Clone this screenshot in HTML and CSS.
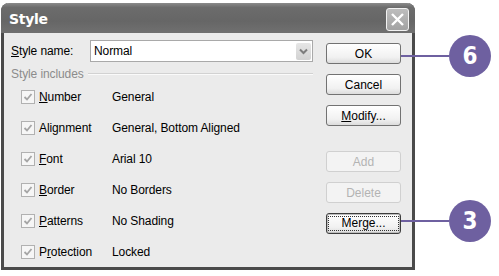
FILE: index.html
```html
<!DOCTYPE html>
<html lang="en">

<head>
    <meta charset="UTF-8">
    <meta name="viewport" content="width=device-width, initial-scale=1.0">
    <title>Style</title>
    <link rel="stylesheet" href="styles.css">
</head>

<body>
    <div class="scene">
        <div class="dialog">
            <div class="titlebar">
                <span class="title">Style</span>
                <span class="close">
                    <svg width="15" height="15" viewBox="0 0 15 15">
                        <path d="M2 2 L13 13 M13 2 L2 13" stroke="#fff" stroke-width="2.4" fill="none" />
                    </svg>
                </span>
            </div>
            <div class="content">
                <div class="main">
                    <div class="name-row">
                        <label class="name-label"><u>S</u>tyle name:</label>
                        <div class="combo">
                            <span class="combo-text">Normal</span>
                            <span class="combo-arrow">
                                <svg width="9" height="7" viewBox="0 0 9 7">
                                    <path d="M1 1.5 L4.5 5 L8 1.5" stroke="#7d7d7d" stroke-width="2" fill="none" />
                                </svg>
                            </span>
                        </div>
                    </div>

                    <div class="group-head">
                        <span class="group-title">Style includes</span>
                        <span class="rule"></span>
                    </div>

                    <ul class="includes">
                        <li>
                            <span class="check"><svg width="12" height="12" viewBox="0 0 12 12"><path d="M2.5 6 L5 8.5 L9.5 3" stroke="#a5a5a5" stroke-width="1.8" fill="none" /></svg></span>
                            <span class="inc-label"><u>N</u>umber</span><span class="inc-value">General</span>
                        </li>
                        <li>
                            <span class="check"><svg width="12" height="12" viewBox="0 0 12 12"><path d="M2.5 6 L5 8.5 L9.5 3" stroke="#a5a5a5" stroke-width="1.8" fill="none" /></svg></span>
                            <span class="inc-label">Alignment</span><span class="inc-value">General, Bottom Aligned</span>
                        </li>
                        <li>
                            <span class="check"><svg width="12" height="12" viewBox="0 0 12 12"><path d="M2.5 6 L5 8.5 L9.5 3" stroke="#a5a5a5" stroke-width="1.8" fill="none" /></svg></span>
                            <span class="inc-label"><u>F</u>ont</span><span class="inc-value">Arial 10</span>
                        </li>
                        <li>
                            <span class="check"><svg width="12" height="12" viewBox="0 0 12 12"><path d="M2.5 6 L5 8.5 L9.5 3" stroke="#a5a5a5" stroke-width="1.8" fill="none" /></svg></span>
                            <span class="inc-label"><u>B</u>order</span><span class="inc-value">No Borders</span>
                        </li>
                        <li>
                            <span class="check"><svg width="12" height="12" viewBox="0 0 12 12"><path d="M2.5 6 L5 8.5 L9.5 3" stroke="#a5a5a5" stroke-width="1.8" fill="none" /></svg></span>
                            <span class="inc-label"><u>P</u>atterns</span><span class="inc-value">No Shading</span>
                        </li>
                        <li>
                            <span class="check"><svg width="12" height="12" viewBox="0 0 12 12"><path d="M2.5 6 L5 8.5 L9.5 3" stroke="#a5a5a5" stroke-width="1.8" fill="none" /></svg></span>
                            <span class="inc-label">P<u>r</u>otection</span><span class="inc-value">Locked</span>
                        </li>
                    </ul>
                </div>

                <div class="buttons">
                    <button class="btn">OK</button>
                    <button class="btn">Cancel</button>
                    <button class="btn"><u>M</u>odify...</button>
                    <button class="btn disabled add">Add</button>
                    <button class="btn disabled">Delete</button>
                    <button class="btn focused"><span class="focus-rect">Merge...</span></button>
                </div>
            </div>
        </div>

        <div class="callout callout-6">
            <span class="callout-line"></span>
            <span class="callout-dot">6</span>
        </div>
        <div class="callout callout-3">
            <span class="callout-line"></span>
            <span class="callout-dot">3</span>
        </div>
    </div>
</body>

</html>
```

FILE: styles.css
```css
body {
    margin: 0;
    background-color: #fff;
    font-family: "Liberation Sans", Arial, sans-serif;
    font-size: 12px;
    letter-spacing: -0.1px;
    color: #000;
}

.scene {
    position: relative;
    width: 499px;
    height: 276px;
    padding-top: 3px;
    box-sizing: border-box;
}

.dialog {
    margin-left: 1px;
    width: 414px;
    height: 267px;
    box-sizing: border-box;
    border: 3px solid #4a4a4a;
    border-top: none;
    border-radius: 8px 8px 0 0;
    background-color: #ebebeb;
    display: flex;
    flex-direction: column;
}

.titlebar {
    height: 31px;
    margin: 0 -3px;
    padding: 0 6px 0 8px;
    display: flex;
    align-items: center;
    justify-content: space-between;
    border-radius: 8px 8px 0 0;
    background: linear-gradient(#8a8a8a, #6c6c6c 15%, #666 60%, #707070);
}

.title {
    color: #fff;
    font-family: "DejaVu Sans", sans-serif;
    font-weight: bold;
    font-size: 14px;
    letter-spacing: -0.3px;
    padding-top: 2px;
}

.close {
    width: 21px;
    height: 21px;
    margin-top: 3px;
    border: 1px solid #f2f2f2;
    border-radius: 3px;
    background: linear-gradient(#bdbdbd, #a2a2a2);
    display: flex;
    align-items: center;
    justify-content: center;
}

.content {
    flex: 1;
    display: flex;
    gap: 13px;
    padding: 7px 11px 0 7px;
}

.main {
    width: 302px;
}

.name-row {
    display: flex;
    align-items: center;
    height: 22px;
}

.name-label {
    width: 79px;
}

.combo {
    flex: 1;
    height: 22px;
    box-sizing: border-box;
    border: 1px solid #a9a9a9;
    background-color: #fff;
    display: flex;
    align-items: center;
    justify-content: space-between;
    padding: 0 1px 0 3px;
}

.combo-arrow {
    width: 15px;
    height: 17px;
    background: linear-gradient(#e6e6e6, #d2d2d2);
    border-radius: 2px;
    display: flex;
    align-items: center;
    justify-content: center;
}

.group-head {
    display: flex;
    align-items: center;
    gap: 4px;
    margin-top: 5px;
    height: 14px;
}

.group-title {
    color: #8c8c8c;
}

.rule {
    flex: 1;
    height: 1px;
    background-color: #d2d2d2;
    border-bottom: 1px solid #fafafa;
}

.includes {
    list-style: none;
    margin: 0;
    padding: 0 0 0 10px;
}

.includes li {
    display: flex;
    align-items: center;
    height: 31px;
}

.check {
    width: 12px;
    height: 12px;
    border: 1px solid #b1b1b1;
    background-color: #f6f6f6;
    margin-right: 4px;
    display: flex;
}

.inc-label {
    width: 73px;
}

.buttons {
    width: 75px;
    display: flex;
    flex-direction: column;
    gap: 10px;
    padding-top: 3px;
}

.btn {
    height: 21px;
    width: 75px;
    padding: 0;
    font-family: inherit;
    font-size: 12px;
    color: #000;
    border: 1px solid #727272;
    border-radius: 3px;
    background: linear-gradient(#ffffff, #f1f1f1 70%, #dcdcdc);
}

.btn.add {
    margin-top: 15px;
}

.btn.disabled {
    color: #b3b3b3;
    border-color: #d0d0d0;
    background: #f3f3f3;
}

.btn.focused {
    border-color: #3d3d3d;
    box-shadow: inset 0 0 0 1px #bdbdbd;
}

.focus-rect {
    display: block;
    margin: 2px;
    line-height: 13px;
    outline: 1px dotted #333;
}

.callout {
    position: absolute;
    left: 401px;
    display: flex;
    align-items: center;
}

.callout-6 {
    top: 35px;
}

.callout-3 {
    top: 200px;
}

.callout-line {
    width: 48px;
    height: 2px;
    background-color: #6e60a0;
}

.callout-dot {
    width: 42px;
    height: 42px;
    border-radius: 50%;
    background-color: #6e60a0;
    color: #fff;
    font-family: "DejaVu Sans Condensed", "DejaVu Sans", sans-serif;
    font-weight: bold;
    font-size: 24px;
    display: flex;
    align-items: center;
    justify-content: center;
}
```
